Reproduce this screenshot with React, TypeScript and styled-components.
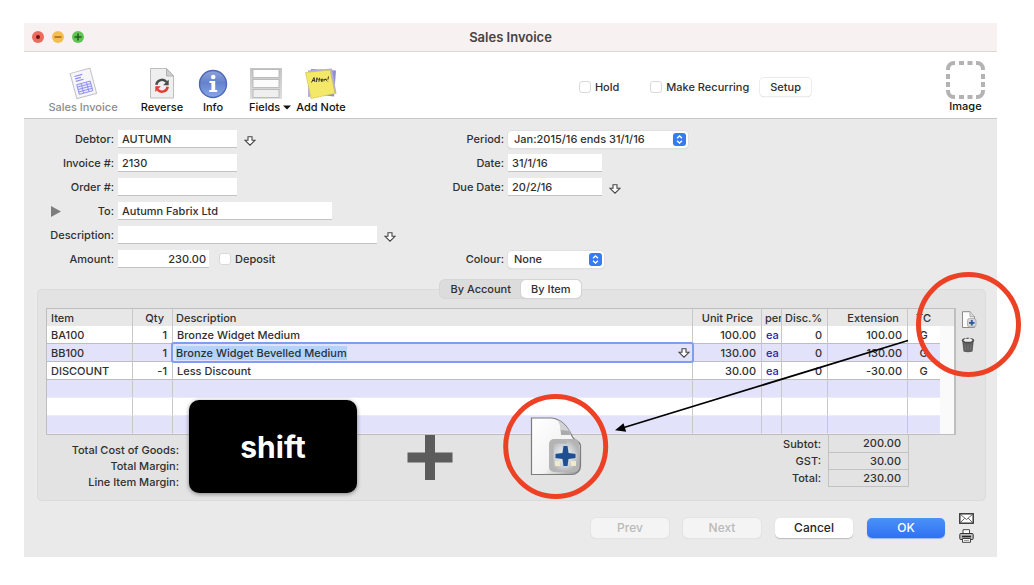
import React from "react";
import styled, { createGlobalStyle, css } from "styled-components";

const GlobalStyle = createGlobalStyle`
  *, *::before, *::after { box-sizing: border-box; }
  body {
    margin: 0;
    background: #ffffff;
    color: #303030;
    font: 500 11px/16px Inter, "Liberation Sans", sans-serif;
  }
  button, input, select { font: inherit; color: inherit; margin: 0; }
`;

/* ---------- window frame ---------- */

const Page = styled.main`
  position: relative;
  padding: 23px 37px 28px 24px;
`;

const Window = styled.section`
  display: flex;
  flex-direction: column;
  background: #eaeaea;
`;

const TitleBar = styled.header`
  display: grid;
  grid-template-columns: 1fr auto 1fr;
  align-items: center;
  height: 29px;
  padding: 0 8px;
  background: #f7f2f1;
  border-bottom: 1px solid #dcd8d8;
`;

const Lights = styled.div`
  display: flex;
  gap: 8px;
`;

const Light = styled.button<{ $color: string }>`
  display: block;
  width: 12px;
  height: 12px;
  padding: 0;
  border: 0;
  border-radius: 50%;
  background: ${(p) => p.$color};
  svg { display: block; }
`;

const Title = styled.h1`
  margin: 0;
  font-size: 13px;
  line-height: 16px;
  font-weight: 600;
  color: #464343;
`;

/* ---------- toolbar ---------- */

const Toolbar = styled.div`
  display: flex;
  align-items: flex-start;
  height: 67px;
  padding: 0 12px 0 24px;
  background: #ffffff;
  border-bottom: 1px solid #c6c6c6;
`;

const Tool = styled.button<{ $width: number; $gap?: number; $dim?: boolean; $start?: boolean }>`
  display: flex;
  flex-direction: column;
  align-items: ${(p) => (p.$start ? "flex-start" : "center")};
  width: ${(p) => p.$width}px;
  margin-left: ${(p) => p.$gap ?? 0}px;
  padding: 15px 0 0;
  border: 0;
  background: none;
  line-height: 14px;
  white-space: nowrap;
  color: ${(p) => (p.$dim ? "#8c8c8c" : "#111111")};
  svg { display: block; }
`;

const ToolLabel = styled.span`
  display: flex;
  align-items: center;
  gap: 3px;
`;

const Options = styled.div`
  display: flex;
  align-items: center;
  gap: 31px;
  height: 70px;
  margin: 0 135px 0 auto;
`;

const RecurringGroup = styled.div`
  display: flex;
  align-items: center;
  gap: 11px;
`;

const CheckLabel = styled.label`
  display: flex;
  align-items: center;
  gap: 4px;
  white-space: nowrap;
`;

const Checkbox = styled.input.attrs({ type: "checkbox" })`
  appearance: none;
  width: 12px;
  height: 12px;
  border: 1px solid #d9d9d9;
  border-radius: 3px;
  background: #ffffff;
`;

const SmallButton = styled.button`
  height: 18px;
  padding: 0 10px;
  border: 0;
  border-radius: 4px;
  background: #ffffff;
  line-height: 16px;
  box-shadow: 0 0 0 1px #ececec, 0 1px 1px #c8c8c8;
`;

const ImageTool = styled.button`
  display: flex;
  flex-direction: column;
  align-items: center;
  padding: 9px 0 0;
  border: 0;
  background: none;
  color: #111111;
  line-height: 14px;
  svg { display: block; }
`;

/* ---------- form ---------- */

const Form = styled.div`
  display: grid;
  grid-template-columns: 3fr 4fr;
  padding: 8px 0 9px;
`;

const Column = styled.div<{ $label: number }>`
  display: grid;
  grid-template-columns: ${(p) => p.$label}px 1fr;
  grid-auto-rows: 24px;
  column-gap: 4px;
  align-items: center;
`;

const FieldLabel = styled.label`
  text-align: right;
  white-space: nowrap;
`;

const ToLabel = styled.div`
  display: flex;
  align-items: center;
  justify-content: space-between;
  padding-left: 27px;
`;

const Disclosure = styled.button`
  display: block;
  padding: 0;
  border: 0;
  background: none;
  svg { display: block; }
`;

const FieldRow = styled.div<{ $gap?: number }>`
  display: flex;
  align-items: center;
  gap: ${(p) => p.$gap ?? 7}px;
`;

const TextField = styled.input<{ $width: number; $right?: boolean }>`
  width: ${(p) => p.$width}px;
  height: 18px;
  padding: 0 3px 0 4px;
  border: 0;
  border-bottom: 1px solid #c3c3c3;
  background: #ffffff;
  text-align: ${(p) => (p.$right ? "right" : "left")};
  outline: none;
`;

const ArrowButton = styled.button`
  display: block;
  padding: 4px 0 0;
  border: 0;
  background: none;
  svg { display: block; }
`;

const SelectBox = styled.span<{ $width: number }>`
  position: relative;
  display: block;
  width: ${(p) => p.$width}px;
  svg {
    position: absolute;
    top: 2px;
    right: 2px;
    pointer-events: none;
  }
`;

const Select = styled.select`
  appearance: none;
  display: block;
  width: 100%;
  height: 17px;
  padding: 0 20px 0 6px;
  border: 0;
  border-radius: 4px;
  background: #ffffff;
  box-shadow: 0 0 0 1px #e0e0e0, 0 1px 1px #bdbdbd;
`;

/* ---------- tabs and item panel ---------- */

const Tabs = styled.div`
  position: relative;
  z-index: 1;
  display: flex;
  align-self: center;
  height: 18px;
  margin-bottom: -9px;
  border-radius: 5px;
  background: #dcdcdc;
  box-shadow: 0 0 0 1px #d6d6d6;
`;

const Tab = styled.button<{ $active?: boolean }>`
  padding: 0 10px;
  border: 0;
  border-radius: 5px;
  background: transparent;
  line-height: 18px;
  ${(p) =>
    p.$active &&
    css`
      background: #ffffff;
      box-shadow: 0 0 0 1px #d4d4d4, 0 1px 1px #bdbdbd;
    `}
`;

const Panel = styled.section`
  margin: 0 11px 0 13px;
  padding: 18px 8px 10px;
  border: 1px solid #dbdbdb;
  border-radius: 5px;
  background: #e3e3e3;
`;

const TableRow = styled.div`
  display: flex;
  gap: 5px;
`;

const TableFrame = styled.div`
  flex: 1;
  min-width: 0;
  display: flex;
  border: 1px solid #bebebe;
  border-right-width: 2px;
  background: #ffffff;
`;

const Table = styled.table`
  flex: 1;
  width: 100%;
  table-layout: fixed;
  border-collapse: separate;
  border-spacing: 0;
`;

const Th = styled.th<{ $right?: boolean; $pad?: number }>`
  height: 17px;
  padding: 0 ${(p) => p.$pad ?? 3}px 0 3px;
  border-right: 1px solid #c8c8c8;
  background: #e7e7e7;
  font-weight: 500;
  line-height: 16px;
  text-align: ${(p) => (p.$right ? "right" : "left")};
  white-space: nowrap;
  overflow: hidden;
  &:first-child { padding-left: 4px; }
  &:last-child { border-right: 0; }
`;

const Td = styled.td<{ $right?: boolean; $link?: boolean; $center?: boolean }>`
  height: 18px;
  padding: 0 5px 0 4px;
  border-right: 1px solid #c8c8c8;
  text-align: ${(p) => (p.$right ? "right" : p.$center ? "center" : "left")};
  color: ${(p) => (p.$link ? "#2a22a8" : "inherit")};
  line-height: 16px;
  white-space: nowrap;
  &:last-child { border-right: 0; }
`;

const Tr = styled.tr<{ $filled?: boolean }>`
  td { border-bottom: 1px solid ${(p) => (p.$filled ? "#bebebe" : "#ecebf6")}; }
  &:nth-child(even) td { background: #e3e2fb; }
`;

const EditCell = styled(Td)`
  padding: 0;
`;

const Editor = styled.div`
  position: relative;
  display: flex;
  align-items: center;
  justify-content: space-between;
  height: 17px;
  padding: 0 2px 0 3px;
  box-shadow: 0 0 0 2px #7e9ff0;
  border-radius: 1px;
`;

const EditInput = styled.input`
  field-sizing: content;
  height: 14px;
  padding: 0;
  border: 0;
  background: #b2d4fc;
  outline: none;
`;

const Gutter = styled.div`
  width: 14px;
  border-top: 17px solid #e7e7e7;
  background: #fafafa;
`;

const SideTools = styled.div`
  display: flex;
  flex-direction: column;
  align-items: flex-start;
  gap: 9px;
  padding-top: 3px;
`;

const IconButton = styled.button`
  display: block;
  padding: 0;
  border: 0;
  background: none;
  svg { display: block; }
`;

const Summary = styled.div`
  display: flex;
  justify-content: space-between;
  align-items: flex-start;
  padding-right: 68px;
`;

const Margins = styled.div`
  width: 133px;
  padding-top: 7px;
  text-align: right;
`;

const Totals = styled.table`
  border-collapse: collapse;
  text-align: right;
  th {
    height: 17px;
    padding: 0 7px 0 0;
    font-weight: 500;
    line-height: 16px;
  }
  td {
    width: 80px;
    padding: 0 7px 0 0;
    border: 1px solid #c2c2c2;
    border-top: 0;
    line-height: 16px;
  }
`;

/* ---------- footer ---------- */

const Footer = styled.footer`
  display: flex;
  justify-content: flex-end;
  align-items: flex-start;
  gap: 14px;
  padding: 12px 23px 14px;
`;

const PushButton = styled.button<{ $primary?: boolean }>`
  width: 78px;
  height: 20px;
  margin-top: 5px;
  padding: 0;
  border: 0;
  border-radius: 5px;
  font-size: 12px;
  line-height: 20px;
  background: ${(p) => (p.$primary ? "linear-gradient(#4b92f8, #2f70f4)" : "#ffffff")};
  color: ${(p) => (p.$primary ? "#ffffff" : "#262626")};
  box-shadow: 0 1px 1px ${(p) => (p.$primary ? "#9db6e6" : "#bcbcbc")};
  &:disabled {
    background: #f4f4f4;
    color: #bababa;
    box-shadow: 0 0 0 1px #e4e4e4, 0 1px 1px #d0d0d0;
  }
`;

const Outputs = styled.div`
  display: flex;
  flex-direction: column;
  gap: 5px;
`;

/* ---------- annotations over the window ---------- */

const Markup = styled.svg`
  position: absolute;
  top: 0;
  left: 0;
  width: 100%;
  pointer-events: none;
`;

const KeyCap = styled.kbd`
  position: absolute;
  top: 400px;
  left: 189px;
  display: flex;
  align-items: center;
  justify-content: center;
  width: 168px;
  height: 93px;
  border-radius: 10px;
  background: #000000;
  box-shadow: 0 1px 4px rgba(0, 0, 0, 0.45);
  color: #ffffff;
  font: 700 30px/36px Inter, "Liberation Sans", sans-serif;
`;

/* ---------- icons ---------- */

const DownArrow = () => (
  <svg width="12" height="10" viewBox="0 0 12 10">
    <path d="M4 .7h4v3.6h3L6 9.2 1 4.300h3z" fill="#fff" stroke="#444" strokeWidth="1.1" />
  </svg>
);

const Stepper = () => (
  <svg width="13" height="13" viewBox="0 0 13 13">
    <rect width="13" height="13" rx="3" fill="#347bf6" />
    <path d="M4 5.300 6.500 3 9 5.300M4 7.700 6.500 10 9 7.700" fill="none" stroke="#fff" strokeWidth="1.300" />
  </svg>
);

const InvoiceIcon = () => (
  <svg width="34" height="33" viewBox="0 0 34 33">
    <g transform="rotate(-15 17 16)">
      <rect x="7" y="3.500" width="20.500" height="26" fill="#f6f6fa" stroke="#c2c2c2" />
      <path d="M10.500 7.500h8M10.500 10h6M10.500 12.500h8" stroke="#8e8ef0" strokeWidth="1.200" />
      <path d="M10.500 16h14v10h-14zM10.500 18.500h14M10.500 21h14M10.500 23.500h14M15 16v10M20.500 16v10" fill="#e9e9ff" stroke="#9090ee" strokeWidth=".9" />
    </g>
  </svg>
);

const ReverseIcon = () => (
  <svg width="26" height="33" viewBox="0 0 26 33">
    <path d="M1.500 1.500h16l7 7.500v22h-23z" fill="#efefef" stroke="#bdbdbd" />
    <path d="M17.500 1.500V9h7z" fill="#cfcfcf" stroke="#b0b0b0" />
    <path d="M7.300 17.800a5.800 5.800 0 0 1 10.200-2.800" fill="none" stroke="#4b4b4b" strokeWidth="2.500" />
    <path d="M19.700 12.500v5.700h-5.500z" fill="#4b4b4b" />
    <path d="M18.700 19.700a5.800 5.800 0 0 1-10.200 2.800" fill="none" stroke="#e23b30" strokeWidth="2.500" />
    <path d="M6.300 25V19.300h5.500z" fill="#e23b30" />
  </svg>
);

const InfoIcon = () => (
  <svg width="30" height="33" viewBox="0 0 30 33">
    <defs>
      <linearGradient id="info" x1="0" y1="0" x2="0" y2="1">
        <stop offset="0" stopColor="#8ea2da" />
        <stop offset=".45" stopColor="#6482cc" />
        <stop offset="1" stopColor="#86a8e6" />
      </linearGradient>
    </defs>
    <circle cx="15" cy="17" r="13.500" fill="url(#info)" stroke="#4e68b4" strokeWidth="1.400" />
    <circle cx="15.200" cy="10" r="2.300" fill="#fff" />
    <path d="M11.500 14h5.700v9h2v2h-8v-2h2.200v-7h-1.900z" fill="#fff" />
  </svg>
);

const FieldsIcon = () => (
  <svg width="34" height="33" viewBox="0 0 34 33">
    <defs>
      <linearGradient id="fields" x1="0" y1="0" x2="0" y2="1">
        <stop offset="0" stopColor="#c4c4c4" />
        <stop offset="1" stopColor="#dedede" />
      </linearGradient>
    </defs>
    <rect x="1" y="1" width="32" height="31" fill="url(#fields)" />
    <g stroke="#b2b2b2" strokeWidth=".8">
      <rect x="4" y="2.500" width="26" height="8" fill="#fff" />
      <rect x="4" y="12.500" width="26" height="8" fill="#fbfbfb" />
      <rect x="4" y="22.500" width="26" height="8" fill="#efefef" />
    </g>
  </svg>
);

const NoteIcon = () => (
  <svg width="34" height="33" viewBox="0 0 34 33">
    <path d="M7 2l25 1.500-2 26-25-3z" fill="#8f8bd6" />
    <path d="M4 3.500l24-2 4.500 25L4 30z" fill="#b3aee6" />
    <path d="M1.500 5.500 26 3l5 23.500-24 5z" fill="#f3e868" stroke="#cdbf45" strokeWidth=".6" />
    <path d="M7.500 15.500 10 10.500l1 4.500M8.500 13.700l2.500-.4M13 10.500l-.5 4.500M12 12h2M15.500 10.800l-.6 4M14.500 12.300h2M17 13.500l2-.6-.5-1-1.400.7.200 1.800 1.500-.3M20 14.300l.2-2.300 1 1 .6-1.200.9 2M24.500 9.500l-.6 3.200M23.800 14v.5" fill="none" stroke="#3b3722" strokeWidth="1" />
  </svg>
);

const PlaceholderIcon = () => (
  <svg width="39" height="38" viewBox="0 0 39 38">
    <g fill="none" stroke="#b3b3b3" strokeWidth="4">
      <path d="M2 9V8a6 6 0 0 1 6-6h1M30 2h1a6 6 0 0 1 6 6v1M37 29v1a6 6 0 0 1-6 6h-1M9 36H8a6 6 0 0 1-6-6v-1" />
      <path d="M13 2h5M21.500 2h5M13 36h5M21.500 36h5M2 13v5M2 21v5M37 13v5M37 21v5" />
    </g>
  </svg>
);

const AddDocIcon = () => (
  <svg width="16" height="17" viewBox="0 0 16 17">
    <path d="M1.500.7h7.500l4.500 5v10.800h-12z" fill="#fbfbfb" stroke="#8a8a8a" />
    <path d="M9 .7v5h4.500" fill="#ddd" stroke="#9a9a9a" strokeWidth=".8" />
    <rect x="6.500" y="7.500" width="8.500" height="8.500" rx="2" fill="#d4d6d8" stroke="#a4a4a4" strokeWidth=".8" />
    <path d="M10.800 9v5.500M8 11.800h5.500" stroke="#2b5a96" strokeWidth="1.800" />
  </svg>
);

const TrashIcon = () => (
  <svg width="14" height="16" viewBox="0 0 14 16">
    <path d="M1.200 3h11.600l-1.300 11.500q-4.500 1.300-9 0z" fill="#5c5c5c" />
    <path d="M4 7.500l.7 6M7 7.500v6M10 7.500l-.7 6" stroke="#8c8c8c" strokeWidth=".6" />
    <ellipse cx="7" cy="3.400" rx="6.200" ry="2.700" fill="#4a4a4a" />
    <path d="M2.200 3.400 4.500 1.200l2 .8 2.500-1 2.800 2.200-2 1.600H4.500z" fill="#ececec" />
  </svg>
);

const MailIcon = () => (
  <svg width="15" height="11" viewBox="0 0 15 11">
    <rect x=".8" y=".8" width="13.400" height="9.400" fill="#fff" stroke="#2e2e2e" strokeWidth="1.400" />
    <path d="M1.500 1.500 7.500 6.500l6-5M1.500 9.500l4.300-4.300M13.500 9.500 9.200 5.200" fill="none" stroke="#555" strokeWidth=".9" />
  </svg>
);

const PrinterIcon = () => (
  <svg width="15" height="14" viewBox="0 0 15 14">
    <path d="M4 5V.7h6.500V5" fill="#fff" stroke="#444" />
    <rect x=".8" y="4.500" width="13.400" height="6" rx="1" fill="#bdbdbd" stroke="#333" />
    <path d="M3 7.500h9" stroke="#222" strokeWidth="1.600" />
    <path d="M3.500 9.500h8v3.800h-8z" fill="#fff" stroke="#444" />
    <path d="M5 11.400h5" stroke="#777" strokeWidth=".8" />
  </svg>
);

/* ---------- data ---------- */

type Item = {
  code: string; qty: string; text: string; price: string;
  per: string; disc: string; ext: string; tax: string; editing?: boolean;
};

const items: Item[] = [
  { code: "BA100", qty: "1", text: "Bronze Widget Medium", price: "100.00", per: "ea", disc: "0", ext: "100.00", tax: "G" },
  { code: "BB100", qty: "1", text: "Bronze Widget Bevelled Medium", price: "130.00", per: "ea", disc: "0", ext: "130.00", tax: "G", editing: true },
  { code: "DISCOUNT", qty: "-1", text: "Less Discount", price: "30.00", per: "ea", disc: "0", ext: "-30.00", tax: "G" },
];

const blankRows = [0, 1, 2];
const columnWidths = [86, 40, 0, 69, 20, 46, 80, 32];

const totals = [
  ["Subtot:", "200.00"],
  ["GST:", "30.00"],
  ["Total:", "230.00"],
];

export default function App() {
  return (
    <Page>
      <GlobalStyle />
      <Window>
        <TitleBar>
          <Lights>
            <Light $color="#ec6a5e" aria-label="Close">
              <svg width="12" height="12"><circle cx="6" cy="6" r="2" fill="#6d1410" /></svg>
            </Light>
            <Light $color="#f4be4f" aria-label="Minimise">
              <svg width="12" height="12"><path d="M2.500 6h7" stroke="#905a14" strokeWidth="1.300" /></svg>
            </Light>
            <Light $color="#5fc454" aria-label="Zoom">
              <svg width="12" height="12"><path d="M2.500 6h7M6 2.500v7" stroke="#1d5e16" strokeWidth="1.500" /></svg>
            </Light>
          </Lights>
          <Title>Sales Invoice</Title>
        </TitleBar>

        <Toolbar>
          <Tool $width={70} $dim><InvoiceIcon /><ToolLabel>Sales Invoice</ToolLabel></Tool>
          <Tool $width={48} $gap={20}><ReverseIcon /><ToolLabel>Reverse</ToolLabel></Tool>
          <Tool $width={30} $gap={12}><InfoIcon /><ToolLabel>Info</ToolLabel></Tool>
          <Tool $width={44} $gap={21} $start>
            <FieldsIcon />
            <ToolLabel>
              Fields
              <svg width="8" height="5"><path d="M0 .5h8L4 4.500z" fill="#111" /></svg>
            </ToolLabel>
          </Tool>
          <Tool $width={50} $gap={3}><NoteIcon /><ToolLabel>Add Note</ToolLabel></Tool>
          <Options>
            <CheckLabel><Checkbox />Hold</CheckLabel>
            <RecurringGroup>
              <CheckLabel><Checkbox />Make Recurring</CheckLabel>
              <SmallButton>Setup</SmallButton>
            </RecurringGroup>
          </Options>
          <ImageTool><PlaceholderIcon />Image</ImageTool>
        </Toolbar>

        <Form>
          <Column $label={90}>
            <FieldLabel htmlFor="debtor">Debtor:</FieldLabel>
            <FieldRow>
              <TextField id="debtor" $width={119} defaultValue="AUTUMN" />
              <ArrowButton aria-label="Choose debtor"><DownArrow /></ArrowButton>
            </FieldRow>
            <FieldLabel htmlFor="number">Invoice #:</FieldLabel>
            <TextField id="number" $width={119} defaultValue="2130" />
            <FieldLabel htmlFor="order">Order #:</FieldLabel>
            <TextField id="order" $width={119} />
            <ToLabel>
              <Disclosure aria-label="Show address">
                <svg width="10" height="11"><path d="M0 0 10 5.500 0 11z" fill="#7d7d7d" /></svg>
              </Disclosure>
              <FieldLabel htmlFor="to">To:</FieldLabel>
            </ToLabel>
            <TextField id="to" $width={214} defaultValue="Autumn Fabrix Ltd" />
            <FieldLabel htmlFor="description">Description:</FieldLabel>
            <FieldRow>
              <TextField id="description" $width={259} />
              <ArrowButton aria-label="Choose description"><DownArrow /></ArrowButton>
            </FieldRow>
            <FieldLabel htmlFor="amount">Amount:</FieldLabel>
            <FieldRow $gap={10}>
              <TextField id="amount" $width={91} $right defaultValue="230.00" />
              <CheckLabel><Checkbox />Deposit</CheckLabel>
            </FieldRow>
          </Column>

          <Column $label={63}>
            <FieldLabel htmlFor="period">Period:</FieldLabel>
            <SelectBox $width={180}>
              <Select id="period"><option>Jan:2015/16 ends 31/1/16</option></Select>
              <Stepper />
            </SelectBox>
            <FieldLabel htmlFor="date">Date:</FieldLabel>
            <TextField id="date" $width={94} defaultValue="31/1/16" />
            <FieldLabel htmlFor="due">Due Date:</FieldLabel>
            <FieldRow>
              <TextField id="due" $width={94} defaultValue="20/2/16" />
              <ArrowButton aria-label="Choose due date"><DownArrow /></ArrowButton>
            </FieldRow>
            <span /><span />
            <span /><span />
            <FieldLabel htmlFor="colour">Colour:</FieldLabel>
            <SelectBox $width={96}>
              <Select id="colour"><option>None</option></Select>
              <Stepper />
            </SelectBox>
          </Column>
        </Form>

        <Tabs role="tablist">
          <Tab role="tab">By Account</Tab>
          <Tab role="tab" aria-selected $active>By Item</Tab>
        </Tabs>

        <Panel>
          <TableRow>
            <TableFrame>
              <Table>
                <colgroup>
                  {columnWidths.map((w, i) => <col key={i} width={w || undefined} />)}
                </colgroup>
                <thead>
                  <tr>
                    <Th>Item</Th>
                    <Th $right $pad={8}>Qty</Th>
                    <Th>Description</Th>
                    <Th $right $pad={8}>Unit Price</Th>
                    <Th $pad={0}>per</Th>
                    <Th $right $pad={6}>Disc.%</Th>
                    <Th $right $pad={8}>Extension</Th>
                    <Th $right $pad={9}>TC</Th>
                  </tr>
                </thead>
                <tbody>
                  {items.map((it) => (
                    <Tr key={it.code} $filled>
                      <Td>{it.code}</Td>
                      <Td $right>{it.qty}</Td>
                      {it.editing ? (
                        <EditCell>
                          <Editor>
                            <EditInput aria-label="Item description" defaultValue={it.text} />
                            <IconButton aria-label="Choose item"><DownArrow /></IconButton>
                          </Editor>
                        </EditCell>
                      ) : (
                        <Td>{it.text}</Td>
                      )}
                      <Td $right>{it.price}</Td>
                      <Td $link>{it.per}</Td>
                      <Td $right>{it.disc}</Td>
                      <Td $right>{it.ext}</Td>
                      <Td $center>{it.tax}</Td>
                    </Tr>
                  ))}
                  {blankRows.map((r) => (
                    <Tr key={r}>
                      {columnWidths.map((_, i) => <Td key={i} />)}
                    </Tr>
                  ))}
                </tbody>
              </Table>
              <Gutter />
            </TableFrame>
            <SideTools>
              <IconButton aria-label="Insert line"><AddDocIcon /></IconButton>
              <IconButton aria-label="Delete line"><TrashIcon /></IconButton>
            </SideTools>
          </TableRow>
          <Summary>
            <Margins>
              <div>Total Cost of Goods:</div>
              <div>Total Margin:</div>
              <div>Line Item Margin:</div>
            </Margins>
            <Totals>
              <tbody>
                {totals.map(([name, value]) => (
                  <tr key={name}><th scope="row">{name}</th><td>{value}</td></tr>
                ))}
              </tbody>
            </Totals>
          </Summary>
        </Panel>

        <Footer>
          <PushButton disabled>Prev</PushButton>
          <PushButton disabled>Next</PushButton>
          <PushButton>Cancel</PushButton>
          <PushButton $primary>OK</PushButton>
          <Outputs>
            <IconButton aria-label="Email"><MailIcon /></IconButton>
            <IconButton aria-label="Print"><PrinterIcon /></IconButton>
          </Outputs>
        </Footer>
      </Window>

      <KeyCap>shift</KeyCap>
      <Markup viewBox="0 0 1034 585">
        <defs>
          <linearGradient id="sheet" x1="0" y1="0" x2="1" y2="1">
            <stop offset="0" stopColor="#ffffff" />
            <stop offset="0.600" stopColor="#f3f3f3" />
            <stop offset="1" stopColor="#8f8f8f" />
          </linearGradient>
          <radialGradient id="badge">
            <stop offset="0" stopColor="#f2f4f6" />
            <stop offset="0.600" stopColor="#d3d6da" />
            <stop offset="1" stopColor="#b4b4b4" />
          </radialGradient>
        </defs>
        <path d="M430 435v45M407.500 457.500h45" stroke="#5c5c5c" strokeWidth="10" />
        <path d="M531.500 418h20c10 1 17 10 21 19 2 4 8 4 8 9v20c0 5-4 8.500-9 8.500h-40z" fill="url(#sheet)" stroke="#7c7c7c" strokeWidth="1.200" />
        <path d="M558 420c1 4 3 6 2 10l1 4h10c-3-6-7-11-13-14z" fill="#d2d2d2" />
        <path d="M561 430l8 1 2 4h-10z" fill="#ababab" />
        <rect x="549" y="439" width="30" height="33" rx="5" fill="url(#badge)" />
        <path d="M552 441v28M551 442h16" stroke="#b4b4b4" strokeWidth="3" />
        <path d="M565.500 444.500v23M554.500 456h22" stroke="#c3d0e0" strokeWidth="6" />
        <path d="M563.500 446h4l1 7 7 1v4l-7 1-1 7h-4l-1-7-7-1v-4l7-1z" fill="#1f4f8f" />
        <rect x="555" y="461" width="5" height="5" fill="#efe9cf" />
        <rect x="571" y="461" width="5" height="5" fill="#efe9cf" />
        <path d="M908 340.500 624 427.500" stroke="#000" strokeWidth="1.800" />
        <path d="M615 430.300 623.500 423.200 626.200 431.800z" fill="#000" />
        <circle cx="555.700" cy="446.500" r="50" fill="none" stroke="#ec4125" strokeWidth="5" />
        <circle cx="968.500" cy="324.500" r="50" fill="none" stroke="#ec4125" strokeWidth="5" />
      </Markup>
    </Page>
  );
}
